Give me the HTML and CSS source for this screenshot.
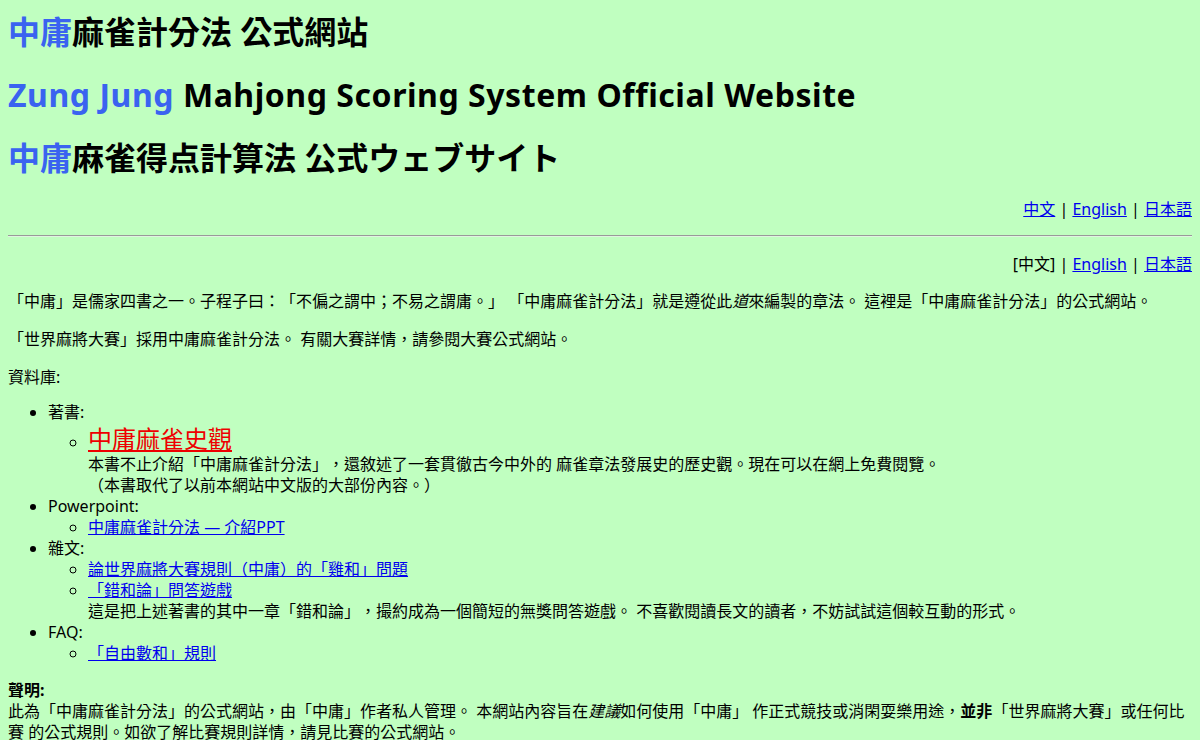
FILE: index.html
```html
<!DOCTYPE html>
<html lang="zh-Hant">
<head>
<meta charset="utf-8">
<title>中庸麻雀計分法 公式網站</title>
<link rel="stylesheet" href="styles.css">
</head>
<body>
<header class="titles">
  <h1 class="title"><span class="accent">中庸</span>麻雀計分法 公式網站</h1>
  <h1 class="title en"><span class="accent">Zung Jung</span> Mahjong Scoring System Official Website</h1>
  <h1 class="title jp" lang="ja"><span class="accent">中庸</span>麻雀得点計算法 公式ウェブサイト</h1>
</header>
<nav class="lang"><a href="#">中文</a> | <a href="#">English</a> | <a href="#" lang="ja">日本語</a></nav>
<hr class="rule">
<nav class="lang lang2">[中文] | <a href="#">English</a> | <a href="#" lang="ja">日本語</a></nav>
<main>
  <p class="intro">「中庸」是儒家四書之一。子程子曰：「不偏之謂中；不易之謂庸。」 「中庸麻雀計分法」就是遵從此<i>道</i>來編製的章法。 這裡是「中庸麻雀計分法」的公式網站。</p>
  <p class="intro2">「世界麻將大賽」採用中庸麻雀計分法。 有關大賽詳情，請參閱大賽公式網站。</p>
  <p class="lib">資料庫:</p>
  <ul class="list">
    <li>著書:
      <ul class="sub">
        <li><a href="#" class="book">中庸麻雀史觀</a><br>本書不止介紹「中庸麻雀計分法」，還敘述了一套貫徹古今中外的 麻雀章法發展史的歷史觀。現在可以在網上免費閱覽。<br>（本書取代了以前本網站中文版的大部份內容。）</li>
      </ul>
    </li>
    <li>Powerpoint:
      <ul class="sub">
        <li><a href="#">中庸麻雀計分法 — 介紹PPT</a></li>
      </ul>
    </li>
    <li>雜文:
      <ul class="sub">
        <li><a href="#">論世界麻將大賽規則（中庸）的「雞和」問題</a></li>
        <li><a href="#">「錯和論」問答遊戲</a><br>這是把上述著書的其中一章「錯和論」，撮約成為一個簡短的無獎問答遊戲。 不喜歡閱讀長文的讀者，不妨試試這個較互動的形式。</li>
      </ul>
    </li>
    <li>FAQ:
      <ul class="sub">
        <li><a href="#">「自由數和」規則</a></li>
      </ul>
    </li>
  </ul>
  <p class="note"><b>聲明:</b><br>此為「中庸麻雀計分法」的公式網站，由「中庸」作者私人管理。 本網站內容旨在<i>建議</i>如何使用「中庸」 作正式競技或消閑耍樂用途，<b>並非</b>「世界麻將大賽」或任何比賽 的公式規則。如欲了解比賽規則詳情，請見比賽的公式網站。</p>
</main>
</body>
</html>
```

FILE: styles.css
```css
html {
  background: #c0ffc0;
}
body {
  margin: 12px 8px 8px;
  background: #c0ffc0;
  color: #000;
  font-family: "Noto Sans", "Noto Sans CJK TC", sans-serif;
  font-size: 16px;
  line-height: 21px;
  text-spacing-trim: space-all;
}
.titles {
  display: flex;
  flex-direction: column;
  gap: 23px;
}
.title {
  margin: 0;
  font-size: 32px;
  line-height: 40px;
  font-weight: bold;
  font-family: "Noto Sans", "Noto Sans CJK TC", sans-serif;
}
.title.en {
  letter-spacing: 0.55px;
}
.title.jp {
  font-family: "Noto Sans", "Noto Sans CJK JP", sans-serif;
}
.accent {
  color: #3a63f0;
}
a {
  color: #0000ee;
}
.lang {
  text-align: right;
  margin-top: 21px;
}
.lang2 {
  margin-top: 17px;
}
.rule {
  margin: 15px 0 0;
  border: none;
  border-top: 1px solid #9a9a9a;
  border-bottom: 1px solid #e0f5e0;
  height: 0;
}
main p {
  margin: 0;
}
main p.intro {
  margin: 16px 0 17px;
}
main p.intro2 {
  margin: 0 0 17px;
}
main p.lib {
  margin: 0 0 14px;
}
.list {
  margin: 0;
  padding-left: 40px;
}
.sub {
  margin: 0;
  padding-left: 40px;
  list-style-type: circle;
}
.book {
  color: #ee0000;
  font-size: 24px;
  line-height: 31px;
}
main p.note {
  margin-top: 16px;
}
```
